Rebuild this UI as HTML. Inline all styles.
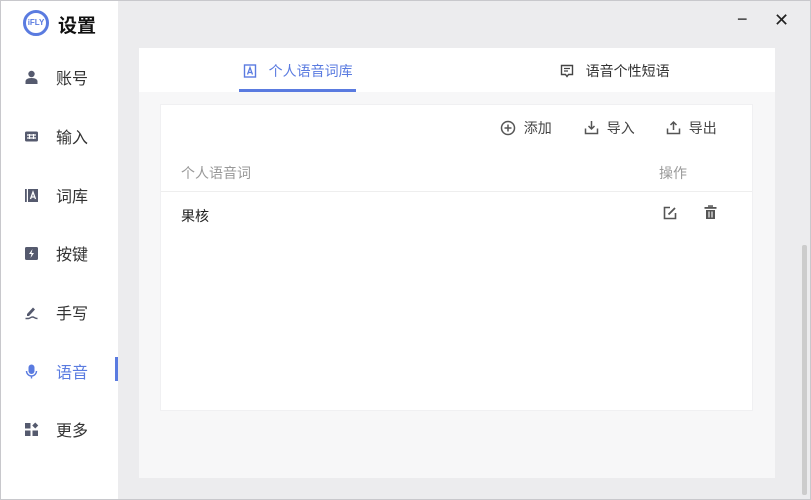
<!DOCTYPE html>
<html><head><meta charset="utf-8"><style>
*{margin:0;padding:0;box-sizing:border-box}
body{width:811px;height:500px;overflow:hidden;font-family:"Liberation Sans","Noto Sans CJK SC",sans-serif;background:#ececee;position:relative;color:#333}
.win{position:absolute;left:0;top:0;width:811px;height:500px;border:1px solid #c8c8cc}
.side{position:absolute;left:1px;top:1px;width:117px;height:498px;background:#fff}
.logo{position:absolute;left:22px;top:9px;width:26px;height:26px;border:3px solid #5a7be0;border-radius:50%;font-size:8px;font-weight:bold;color:#5a7be0;text-align:center;line-height:20px}
.title{position:absolute;left:57px;top:10px;font-size:19px;font-weight:bold;color:#111}
.item{position:absolute;left:0;width:117px;height:30px;font-size:16px;color:#333}
.item .ic{position:absolute;left:23px;top:7px;width:15px;height:15px}
.item .t{position:absolute;left:55px;top:2px}
.act{color:#5a7be0}
.bar{position:absolute;right:0;top:0;width:3px;height:24px;background:#5a7be0}
.ctl{position:absolute;top:10px;font-size:18px;color:#222}
.panel{position:absolute;left:139px;top:48px;width:636px;height:430px;background:#f7f7f8}
.tabs{position:absolute;left:0;top:0;width:636px;height:44px;background:#fff}
.tab{position:absolute;top:13px;font-size:14px;color:#333}
.card{position:absolute;left:21px;top:56px;width:593px;height:307px;background:#fff;border:1px solid #f0f0f2}
.tb{position:absolute;top:13px;font-size:14px;color:#444}
.hd{position:absolute;top:58px;font-size:14px;color:#999}
.line{position:absolute;left:0;top:86px;width:591px;height:1px;background:#eee}
.scroll{position:absolute;left:802px;top:245px;width:5px;height:250px;background:#ccc;border-radius:2px}
</style></head><body>
<div class="win"></div>
<div class="side">
 <div class="logo">iFLY</div><div class="title">设置</div>
 <div class="item" style="top:62px"><svg class="ic" viewBox="0 0 15 15"><circle cx="7.5" cy="4" r="3.2" fill="#555a6e"/><path d="M1.5 14v-2.5c0-2 2-3.5 6-3.5s6 1.5 6 3.5V14z" fill="#555a6e"/></svg><span class="t">账号</span></div>
 <div class="item" style="top:121px"><svg class="ic" viewBox="0 0 15 15"><rect x="1" y="2.5" width="13" height="10" rx="1.5" fill="#555a6e"/><path d="M3 6h9M3 9h9M5.5 5v5M9.5 5v5" stroke="#fff" stroke-width="1.2"/></svg><span class="t">输入</span></div>
 <div class="item" style="top:180px"><svg class="ic" viewBox="0 0 15 15"><rect x="1" y="1" width="1.8" height="13" fill="#555a6e"/><rect x="4" y="1" width="10" height="13" fill="#555a6e"/><path d="M6.5 11l2.5-7 2.5 7M7.4 9h3.2" stroke="#fff" stroke-width="1.3" fill="none"/></svg><span class="t">词库</span></div>
 <div class="item" style="top:238px"><svg class="ic" viewBox="0 0 15 15"><rect x="1" y="1" width="13" height="13" rx="1.5" fill="#555a6e"/><path d="M8.5 3L5 8h2.5l-1 4L10 7H7.5z" fill="#fff"/></svg><span class="t">按键</span></div>
 <div class="item" style="top:297px"><svg class="ic" viewBox="0 0 15 15"><path d="M3 9l6-6.5 2 2-6 6.5H3z" fill="#555a6e"/><path d="M1.5 13.5h3c1.5 0 2-1.5 4-1.5s2 1.5 5 1.5" stroke="#555a6e" stroke-width="1.4" fill="none"/></svg><span class="t">手写</span></div>
 <div class="item act" style="top:356px"><svg class="ic" viewBox="0 0 15 15"><rect x="4.5" y="0.5" width="6" height="9.5" rx="3" fill="#5a7be0"/><path d="M2.5 7a5 5 0 0010 0M7.5 12v2.5" stroke="#5a7be0" stroke-width="1.4" fill="none"/></svg><span class="t">语音</span><div class="bar"></div></div>
 <div class="item" style="top:414px"><svg class="ic" viewBox="0 0 15 15"><rect x="1" y="1" width="5.5" height="5.5" fill="#555a6e"/><rect x="1" y="8.5" width="5.5" height="5.5" fill="#555a6e"/><rect x="8.5" y="8.5" width="5.5" height="5.5" fill="#555a6e"/><path d="M11.25 0.5l3 3-3 3-3-3z" fill="#555a6e"/></svg><span class="t">更多</span></div>
</div>
<div class="ctl" style="left:737px;top:9px">−</div>
<div class="ctl" style="left:774px">✕</div>
<div class="panel">
 <div class="tabs">
  <div class="tab" style="left:104px;color:#5a7be0"><svg width="14" height="14" viewBox="0 0 14 14" style="vertical-align:-2px"><rect x="1.5" y="1" width="11" height="12" fill="none" stroke="#5a7be0" stroke-width="1.4"/><path d="M4.5 10.5l2.5-7 2.5 7M5.4 8.5h3.2" stroke="#5a7be0" stroke-width="1.3" fill="none"/></svg>&nbsp;&nbsp;&nbsp;个人语音词库</div>
  <div style="position:absolute;left:100px;top:41px;width:117px;height:3px;background:#5a7be0"></div>
  <div class="tab" style="left:421px"><svg width="14" height="14" viewBox="0 0 14 14" style="vertical-align:-2px"><path d="M1.5 1.5h11v9H8.5L7 12.5 5.5 10.5h-4z" fill="none" stroke="#444" stroke-width="1.4"/><path d="M4 4.5h6M4 7h4" stroke="#444" stroke-width="1.3"/></svg>&nbsp;&nbsp;&nbsp;语音个性短语</div>
 </div>
 <div class="card">
  <div class="tb" style="left:339px"><svg width="16" height="16" viewBox="0 0 16 16" style="vertical-align:-3px"><circle cx="8" cy="8" r="6.5" fill="none" stroke="#555" stroke-width="1.5"/><path d="M8 4.5v7M4.5 8h7" stroke="#555" stroke-width="1.5"/></svg>&nbsp; 添加</div>
  <div class="tb" style="left:423px"><svg width="15" height="15" viewBox="0 0 15 15" style="vertical-align:-2px"><path d="M7.5 1v8M4.5 6l3 3 3-3M1.5 8.5v5h12v-5" stroke="#555" stroke-width="1.5" fill="none"/></svg>&nbsp; 导入</div>
  <div class="tb" style="left:505px"><svg width="15" height="15" viewBox="0 0 15 15" style="vertical-align:-2px"><path d="M7.5 10V2M4.5 5l3-3 3 3M1.5 8.5v5h12v-5" stroke="#555" stroke-width="1.5" fill="none"/></svg>&nbsp; 导出</div>
  <div class="hd" style="left:20px">个人语音词</div>
  <div class="hd" style="left:498px">操作</div>
  <div class="line"></div>
  <div style="position:absolute;left:20px;top:101px;font-size:14px;color:#222">果核</div>
  <svg style="position:absolute;left:502px;top:101px" width="14" height="14" viewBox="0 0 14 14"><path d="M7 1.5H1.5v11h11V7" stroke="#555" stroke-width="1.6" fill="none"/><path d="M5.5 8.5L12 2" stroke="#555" stroke-width="1.8"/></svg>
  <svg style="position:absolute;left:543px;top:100px" width="13" height="15" viewBox="0 0 13 15"><rect x="0.5" y="2" width="12" height="1.8" fill="#555"/><rect x="4" y="0.3" width="5" height="1.5" fill="#555"/><path d="M2 5h9v9H2z" fill="#555"/><path d="M5 6.5v6M8 6.5v6" stroke="#fff" stroke-width="1.1"/></svg>
 </div>
</div>
<div class="scroll"></div>
</body></html>
